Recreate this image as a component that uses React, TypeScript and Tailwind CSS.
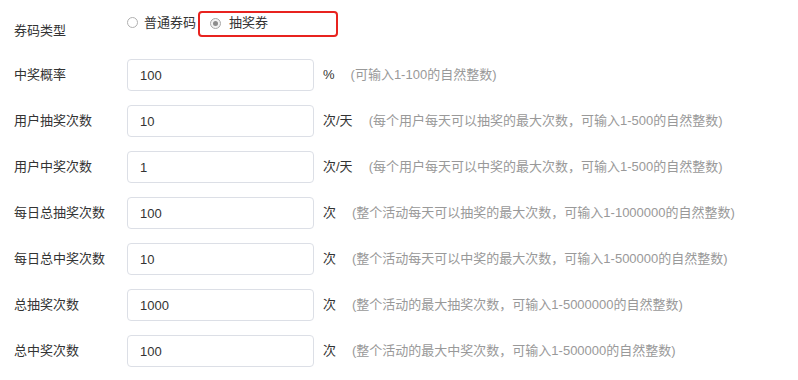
import React from "react";

const rows = [
  { label: "中奖概率", value: "100", unit: "%", hint: "(可输入1-100的自然整数)" },
  { label: "用户抽奖次数", value: "10", unit: "次/天", hint: "(每个用户每天可以抽奖的最大次数，可输入1-500的自然整数)" },
  { label: "用户中奖次数", value: "1", unit: "次/天", hint: "(每个用户每天可以中奖的最大次数，可输入1-500的自然整数)" },
  { label: "每日总抽奖次数", value: "100", unit: "次", hint: "(整个活动每天可以抽奖的最大次数，可输入1-1000000的自然整数)" },
  { label: "每日总中奖次数", value: "10", unit: "次", hint: "(整个活动每天可以中奖的最大次数，可输入1-500000的自然整数)" },
  { label: "总抽奖次数", value: "1000", unit: "次", hint: "(整个活动的最大抽奖次数，可输入1-5000000的自然整数)" },
  { label: "总中奖次数", value: "100", unit: "次", hint: "(整个活动的最大中奖次数，可输入1-500000的自然整数)" },
];

export default function App() {
  return (
    <div
      className="w-[798px] h-[380px] bg-white pl-[14px] pt-[10px] text-[13px] text-[#333] overflow-hidden"
      style={{ fontFamily: '"Liberation Sans", "Noto Sans CJK SC", sans-serif' }}
    >
      <div className="flex items-start h-[40px]">
        <div className="w-[113px] leading-[40px] pt-[1px]">券码类型</div>
        <div className="flex items-center h-[26px] mt-[1px]">
          <div className="flex items-center pb-[3px]">
            <span className="w-[11px] h-[11px] rounded-full border border-[#b0b0b0] bg-white" />
            <span className="ml-[6px] leading-[20px]">普通券码</span>
          </div>
          <div className="ml-[2px] w-[140px] h-[26px] border-2 border-[#e8231f] rounded-[4px] flex items-center pl-[10px] pb-[2px]">
            <span className="w-[11px] h-[11px] rounded-full border border-[#a8a8a8] bg-[#f2f2f2] flex items-center justify-center">
              <span className="w-[5px] h-[5px] rounded-full bg-[#8c8c8c]" />
            </span>
            <span className="ml-[8px] leading-[20px]">抽奖券</span>
          </div>
        </div>
      </div>
      <div className="mt-[9px] flex flex-col gap-[14px]">
        {rows.map((r) => (
          <div key={r.label} className="flex items-center h-[32px]">
            <div className="w-[113px]">{r.label}</div>
            <input
              defaultValue={r.value}
              className="w-[187px] h-[32px] border border-[#dcdfe6] rounded-[4px] px-[12px] text-[13px] text-[#333] outline-none"
              style={{ fontFamily: '"Liberation Sans", "Noto Sans CJK SC", sans-serif' }}
            />
            <span className="ml-[9px] text-[#333]">{r.unit}</span>
            <span className="ml-[16px] text-[#999]">{r.hint}</span>
          </div>
        ))}
      </div>
    </div>
  );
}
